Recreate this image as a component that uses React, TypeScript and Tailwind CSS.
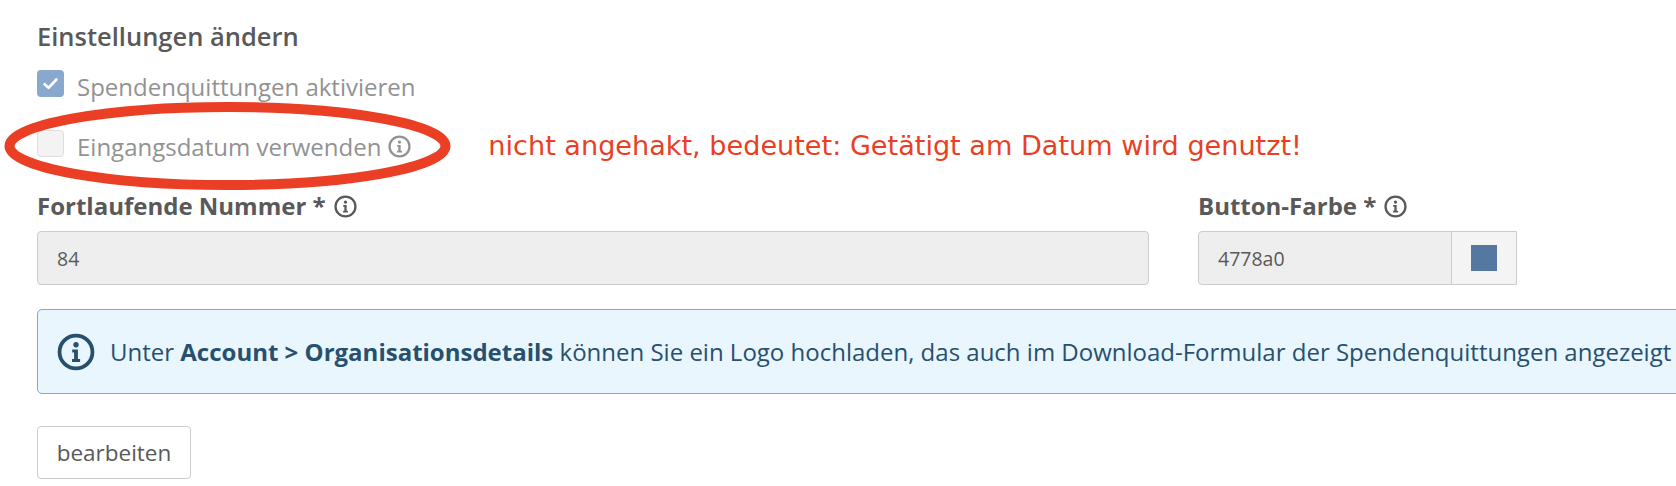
const font = "font-['Open_Sans',sans-serif]";

function InfoIcon({ className }: { className: string }) {
  return (
    <svg viewBox="0 0 24 24" className={className} fill="none">
      <circle cx="12" cy="12" r="10.4" stroke="currentColor" strokeWidth="2.4" />
      <circle cx="12" cy="7.4" r="1.7" fill="currentColor" />
      <path d="M9.6 10.4h3.6v6h1.4v1.9H9.5v-1.9h1.3v-4.1H9.6z" fill="currentColor" />
    </svg>
  );
}

export default function App() {
  return (
    <div className={`relative w-[1676px] h-[486px] overflow-hidden bg-white pl-[37px] pt-[20px] text-[#595959] ${font}`}>
      <h2 className="text-[25.5px] leading-[32px] font-semibold text-[#595959]">Einstellungen ändern</h2>

      <div className="mt-[18px] flex items-center h-[27px]">
        <span className="flex items-center justify-center w-[27px] h-[27px] rounded-[4px] bg-[#88a9cd]">
          <svg viewBox="0 0 24 24" className="w-[19px] h-[19px]" fill="none" stroke="white" strokeWidth="3.4" strokeLinecap="round" strokeLinejoin="round">
            <path d="M4.5 13l5 4.5L19.5 7" />
          </svg>
        </span>
        <span className="ml-[13px] pt-[6px] text-[24px] leading-[28px] text-[#929292]">Spendenquittungen aktivieren</span>
      </div>

      <div className="mt-[33px] flex items-center h-[27px]">
        <span className="w-[27px] h-[27px] rounded-[4px] border border-[#dedede] bg-[#f3f3f3]" />
        <span className="ml-[13px] pt-[6px] text-[24px] leading-[28px] text-[#929292]">Eingangsdatum verwenden</span>
        <InfoIcon className="ml-[7px] mt-[6px] w-[23px] h-[23px] text-[#929292]" />
        <span className="ml-[77px] pt-[4px] text-[27.1px] leading-[28px] text-[#ea3f24] font-['DejaVu_Sans',sans-serif] whitespace-nowrap">nicht angehakt, bedeutet: Getätigt am Datum wird genutzt!</span>
      </div>

      <div className="mt-[33px] flex">
        <div className="w-[1112px]">
          <div className="flex items-center h-[32px] text-[24px] font-bold text-[#595959]">
            Fortlaufende Nummer *
            <InfoIcon className="ml-[8px] w-[23px] h-[23px]" />
          </div>
          <div className="mt-[9px] h-[54px] flex items-center px-[19px] pt-[2px] rounded-[4px] border border-[#cccccc] bg-[#eeeeee] text-[19.5px]">84</div>
        </div>
        <div className="ml-[49px] w-[319px]">
          <div className="flex items-center h-[32px] text-[24px] font-bold text-[#595959]">
            Button-Farbe *
            <InfoIcon className="ml-[8px] w-[23px] h-[23px]" />
          </div>
          <div className="mt-[9px] h-[54px] flex rounded-l-[4px] border border-[#cccccc] bg-[#eeeeee] text-[19.5px]">
            <div className="flex-1 flex items-center px-[19px] pt-[2px]">4778a0</div>
            <div className="w-[65px] flex items-center justify-center border-l border-[#cccccc] bg-[#f4f4f4]">
              <span className="w-[26px] h-[26px] bg-[#54789f]" />
            </div>
          </div>
        </div>
      </div>

      <div className="mt-[24px] -mr-[40px] h-[85px] flex items-center pl-[19px] rounded-[5px] border border-[#7eaad2] bg-[#e9f6fe] text-[#27506f] text-[24px] whitespace-nowrap">
        <InfoIcon className="w-[38px] h-[38px] shrink-0" />
        <span className="ml-[15px]">Unter <b className="font-bold">Account &gt; Organisationsdetails</b> können Sie ein Logo hochladen, das auch im Download-Formular der Spendenquittungen angezeigt</span>
      </div>

      <button className="mt-[32px] w-[154px] h-[53px] rounded-[4px] border border-[#cccccc] bg-white text-[22.5px] text-[#595959]">bearbeiten</button>

      <svg className="absolute left-0 top-[95px] w-[460px] h-[100px]" viewBox="0 0 460 100" fill="none">
        <ellipse cx="227.5" cy="51" rx="218" ry="39" stroke="#ea3f24" strokeWidth="10" />
      </svg>
    </div>
  );
}
